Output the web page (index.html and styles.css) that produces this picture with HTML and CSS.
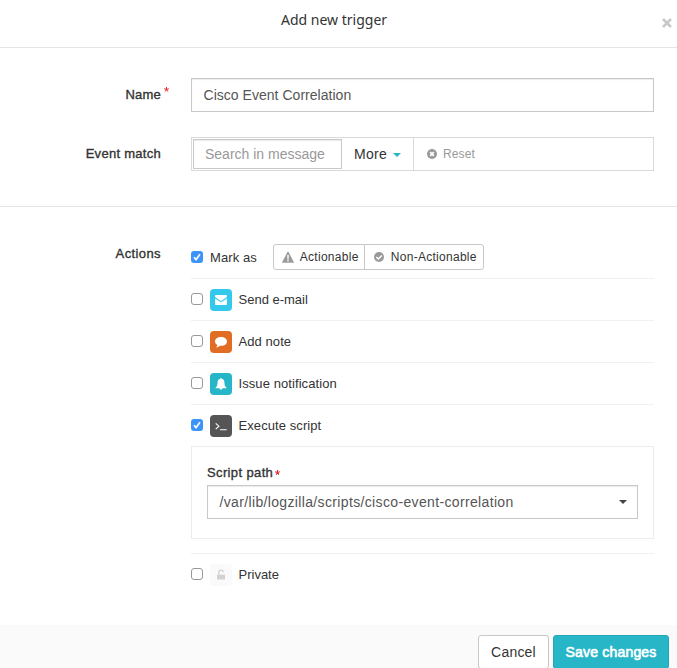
FILE: index.html
```
<!DOCTYPE html>
<html lang="en">
<head>
<meta charset="utf-8">
<title>Add new trigger</title>
<link rel="stylesheet" href="styles.css">
</head>
<body>
<form class="modal">
  <header class="modal-header">
    <h1 class="title">Add new trigger</h1>
    <button type="button" class="close" aria-label="Close"><svg width="10" height="10" viewBox="0 0 10 10"><path d="M1 1 9 9M9 1 1 9" stroke="#c8c8c8" stroke-width="2.5"/></svg></button>
  </header>
  <section class="fields">
    <div class="row">
      <div class="label"><span class="t-name">Name</span><svg class="star" width="5" height="5" viewBox="0 0 6 6"><path d="M3 3V0M3 3 .2 2.1M3 3 5.8 2.1M3 3 1.3 5.5M3 3 4.7 5.5" stroke="#e8242b" stroke-width="1.2"/></svg></div>
      <div class="input"><span class="t-cisco">Cisco Event Correlation</span></div>
    </div>
    <div class="row">
      <div class="label"><span class="t-match">Event match</span></div>
      <div class="match">
        <div class="search"><span class="t-search">Search in message</span></div>
        <div class="more"><span class="t-more">More</span><i class="caret teal"></i></div>
        <div class="reset"><svg width="10" height="10" viewBox="0 0 10 10"><circle cx="5" cy="5" r="5" fill="#999"/><path d="M3.2 3.2 6.8 6.8M6.8 3.2 3.2 6.8" stroke="#fff" stroke-width="1.7"/></svg><span class="t-reset">Reset</span></div>
      </div>
    </div>
  </section>
  <section class="actions">
    <div class="label"><span class="t-actions">Actions</span></div>
    <div class="list">
      <div class="item">
        <span class="check on"><svg width="12" height="12" viewBox="0 0 12 12"><path d="M3 6.3 5 8.6 9 3.2" fill="none" stroke="#fff" stroke-width="1.6"/></svg></span>
        <span class="text t-mark">Mark as</span>
        <div class="group">
          <div class="opt first"><svg width="12" height="12" viewBox="0 0 12 12"><path d="M6 .5 11.8 11.5H.2Z" fill="#999" stroke="#999" stroke-width=".4" stroke-linejoin="round"/><path d="M6 4V7.7M6 8.6V10.2" stroke="#fff" stroke-width="1.5"/></svg><span class="t-act">Actionable</span></div>
          <div class="opt second"><svg width="10" height="10" viewBox="0 0 10 10"><circle cx="5" cy="5" r="5" fill="#999"/><path d="M2.3 5 4.3 7 7.8 3.5" fill="none" stroke="#fff" stroke-width="1.5"/></svg><span class="t-non">Non-Actionable</span></div>
        </div>
      </div>
      <div class="item">
        <span class="check"></span>
        <span class="badge mail"><svg width="22" height="22" viewBox="0 0 22 22"><path d="M5 7Q5 6 6 6H16Q17 6 17 7 17 8 16 8.8L12 11.5Q11 12.2 10 11.5L6 8.8Q5 8 5 7ZM5 9.4 9.6 12.6Q11 13.5 12.4 12.6L17 9.4V15Q17 16 16 16H6Q5 16 5 15Z" fill="#fff"/></svg></span>
        <span class="text t-mail">Send e-mail</span>
      </div>
      <div class="item">
        <span class="check"></span>
        <span class="badge note"><svg width="22" height="22" viewBox="0 0 22 22"><path d="M11 6C14.5 6 17 7.9 17 10.4S14.5 14.8 11 14.8L10 14.7Q8.2 16.3 5.9 16.5 7.3 15.4 7.4 14C5.9 13.1 5 11.9 5 10.4 5 7.9 7.5 6 11 6Z" fill="#fff"/></svg></span>
        <span class="text t-note">Add note</span>
      </div>
      <div class="item">
        <span class="check"></span>
        <span class="badge bell"><svg width="22" height="22" viewBox="0 0 22 22"><path d="M11 5Q11.7 5 11.7 5.8C13.6 6.2 14.4 7.6 14.4 9.4 14.4 12 15.2 13.6 16.6 14.8Q16.6 15.3 16 15.3H12.5Q12.3 16.7 11 16.7T9.5 15.3H6Q5.4 15.3 5.4 14.8C6.8 13.6 7.6 12 7.6 9.4 7.6 7.6 8.4 6.2 10.3 5.8Q10.3 5 11 5Z" fill="#fff"/></svg></span>
        <span class="text t-issue">Issue notification</span>
      </div>
      <div class="item last">
        <span class="check on"><svg width="12" height="12" viewBox="0 0 12 12"><path d="M3 6.3 5 8.6 9 3.2" fill="none" stroke="#fff" stroke-width="1.6"/></svg></span>
        <span class="badge term"><svg width="22" height="22" viewBox="0 0 22 22"><path d="M5.7 8.3 8.9 11.2 5.7 14.1M10 14.8H16.7" fill="none" stroke="#fff" stroke-width="1.1"/></svg></span>
        <span class="text t-exec">Execute script</span>
      </div>
      <div class="panel">
        <div class="panel-label"><span class="t-path">Script path</span><svg width="5" height="5" viewBox="0 0 6 6"><path d="M3 3V0M3 3 .2 2.1M3 3 5.8 2.1M3 3 1.3 5.5M3 3 4.7 5.5" stroke="#e8242b" stroke-width="1.3"/></svg></div>
        <div class="input select"><span class="t-var">/var/lib/logzilla/scripts/cisco-event-correlation</span><i class="caret"></i></div>
      </div>
      <div class="item private">
        <span class="check"></span>
        <span class="badge lock"><svg width="22" height="22" viewBox="0 0 22 22"><path d="M7 10.7H15V15.5H7Z" fill="#d2d2d2"/><path d="M8.8 10.7V8.5Q8.8 6.2 11 6.2T13.2 8.3" fill="none" stroke="#d2d2d2" stroke-width="1.3"/></svg></span>
        <span class="text t-priv">Private</span>
      </div>
    </div>
  </section>
  <footer class="modal-footer">
    <button type="button" class="btn"><span class="t-cancel">Cancel</span></button>
    <button type="button" class="btn primary"><span class="t-save">Save changes</span></button>
  </footer>
</form>
</body>
</html>
```
FILE: styles.css
```
* { box-sizing: border-box; }
body {
  margin: 0;
  height: 668px;
  overflow: hidden;
  background: #fff;
  color: #333;
  font: 13px/20px "Liberation Sans", Arial, sans-serif;
}
svg { display: block; flex: none; }
span { white-space: nowrap; }
.modal { display: flex; flex-direction: column; }
.modal-header {
  display: grid;
  grid-template-columns: 281px 1fr auto;
  height: 48px;
  border-bottom: 1px solid #e5e5e5;
}
.title {
  grid-column: 2;
  margin: 9px 0 0;
  font: 400 14px/22px "Noto Sans", "Open Sans", sans-serif;
}
.close { align-self: start; margin: 18px 5px 0 0; padding: 0; border: 0; background: none; }
.fields {
  display: flex;
  flex-direction: column;
  gap: 25px;
  height: 159px;
  padding: 30px 23px 0 0;
  border-bottom: 1px solid #e5e5e5;
}
.row, .actions { display: grid; grid-template-columns: 161px 463px; column-gap: 30px; }
.label {
  display: flex;
  justify-content: flex-end;
  padding-top: 7px;
  -webkit-text-stroke: .35px #333;
}
.t-name { letter-spacing: .2px; }
.t-match { letter-spacing: .28px; }
.t-actions { letter-spacing: .4px; }
.star { margin: 2px -7.5px 0 2.5px; }
.input {
  display: flex;
  align-items: center;
  height: 34px;
  padding: 0 11px;
  border: 1px solid #c8c8c8;
  box-shadow: inset 0 1px 1px rgba(0, 0, 0, .08);
  color: #555;
  font-size: 14px;
}
.match { display: flex; height: 34px; border: 1px solid #d9d9d9; }
.search {
  width: 149px;
  height: 30px;
  margin: 1px 0 0 1px;
  padding: 4px 11px;
  border: 1px solid #c8c8c8;
  box-shadow: inset 0 1px 1px rgba(0, 0, 0, .08);
  color: #999;
  font-size: 14px;
}
.more {
  display: flex;
  align-items: center;
  gap: 6px;
  width: 72px;
  padding-left: 12px;
  border-right: 1px solid #d9d9d9;
  font-size: 14px;
}
.t-more { letter-spacing: .3px; }
.caret {
  border: 4px solid transparent;
  border-top-color: #444;
  border-bottom: 0;
}
.teal { border-top-color: #27b6c7; margin-top: 2px; }
.reset { display: flex; align-items: center; gap: 6px; padding-left: 13px; color: #999; font-size: 12px; }
.t-reset { letter-spacing: .1px; }
.actions { height: 418px; padding-top: 30px; }
.item { display: flex; align-items: center; height: 42px; border-bottom: 1px solid #f0f0f0; }
.last { border-bottom: 0; height: 41px; padding-top: 1px; }
.check { width: 12px; height: 12px; margin-bottom: 2px; border: 1px solid #999; border-radius: 3px; flex: none; }
.on { border: 0; background: #3b94fb; }
.check + .text { margin-left: 7px; }
.group { display: flex; margin: 0 0 2px 16px; height: 26px; border: 1px solid #c8c8c8; border-radius: 3px; font-size: 12px; }
.t-mark, .t-note, .t-issue, .t-exec { letter-spacing: .08px; }
.t-act, .t-non { letter-spacing: .28px; }
.opt { display: flex; align-items: center; padding-left: 8px; }
.first { width: 91px; gap: 6px; border-right: 1px solid #c8c8c8; }
.second { width: 118px; gap: 7px; padding-left: 9px; }
.badge { width: 22px; height: 22px; margin: 0 6.5px 0 7px; border-radius: 4px; }
.mail { background: #33c9ed; }
.note { background: #e06d23; }
.bell { background: #27b6c7; }
.term { background: #555; }
.lock { background: #fafafa; }
.panel { height: 93px; padding: 15px; border: 1px solid #ececec; }
.panel-label { display: flex; align-items: center; gap: 2px; padding-top: 1px; -webkit-text-stroke: .35px #333; }
.t-path { letter-spacing: .37px; }
.panel-label svg { margin-bottom: 1px; }
.select { justify-content: space-between; margin-top: 2px; padding: 0 10px 0 11.5px; }
.t-cisco { margin-left: .5px; letter-spacing: .03px; }
.t-var { letter-spacing: .35px; }
.private { margin-top: 14px; border-top: 1px solid #f0f0f0; border-bottom: 0; }
.modal-footer {
  display: flex;
  justify-content: flex-end;
  gap: 4px;
  height: 43px;
  padding: 10px 8px 0 0;
  background: #fafafa;
}
.btn {
  flex: none;
  width: 71px;
  height: 34px;
  padding: 0;
  border: 1px solid #c8c8c8;
  border-radius: 3px;
  background: #fff;
  color: #333;
  font: 14px/20px "Liberation Sans", Arial, sans-serif;
  letter-spacing: .2px;
}
.primary { width: 116px; border-color: #22a7b7; background: #27b6c7; color: #fff; -webkit-text-stroke: .6px #fff; }
```
